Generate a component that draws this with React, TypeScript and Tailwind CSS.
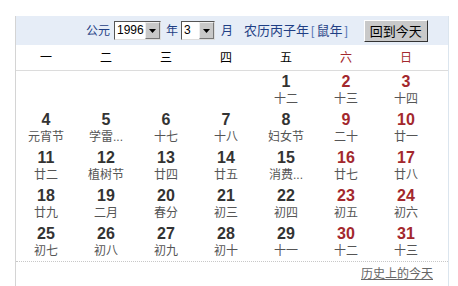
const days: { d: number; l: string }[] = [
  { d: 1, l: '十二' }, { d: 2, l: '十三' }, { d: 3, l: '十四' },
  { d: 4, l: '元宵节' }, { d: 5, l: '学雷...' }, { d: 6, l: '十七' }, { d: 7, l: '十八' },
  { d: 8, l: '妇女节' }, { d: 9, l: '二十' }, { d: 10, l: '廿一' },
  { d: 11, l: '廿二' }, { d: 12, l: '植树节' }, { d: 13, l: '廿四' }, { d: 14, l: '廿五' },
  { d: 15, l: '消费...' }, { d: 16, l: '廿七' }, { d: 17, l: '廿八' },
  { d: 18, l: '廿九' }, { d: 19, l: '二月' }, { d: 20, l: '春分' }, { d: 21, l: '初三' },
  { d: 22, l: '初四' }, { d: 23, l: '初五' }, { d: 24, l: '初六' },
  { d: 25, l: '初七' }, { d: 26, l: '初八' }, { d: 27, l: '初九' }, { d: 28, l: '初十' },
  { d: 29, l: '十一' }, { d: 30, l: '十二' }, { d: 31, l: '十三' },
];

const weekdays = ['一', '二', '三', '四', '五', '六', '日'];

function Select({ value, width }: { value: string; width: string }) {
  return (
    <div className={`flex items-stretch h-[19px] border border-t-[#555] border-l-[#555] border-b-[#ddd] border-r-[#ddd] bg-white ${width}`}>
      <span className="flex-1 pl-[2px] text-[12px] leading-[17px] text-black">{value}</span>
      <span className="w-[15px] bg-[#c8c8c8] border border-[#eee] border-r-[#777] border-b-[#777] flex items-center justify-center">
        <svg width="7" height="4" viewBox="0 0 7 4"><path d="M0 0h7L3.5 4z" fill="#000" /></svg>
      </span>
    </div>
  );
}

export default function App() {
  const cells: ({ d: number; l: string } | null)[] = [null, null, null, null, ...days];
  return (
    <div className="w-[458px] h-[286px] bg-white overflow-hidden pt-4 pl-[15px]" style={{ fontFamily: '"Liberation Sans", "Noto Sans CJK SC", sans-serif' }}>
      <div className="w-[434px] h-[270px] border-l border-l-[#d4d4d4] border-r border-r-[#dbe5ee]">
        {/* header */}
        <div className="h-[29px] bg-[#e6edf7] flex items-center text-[12px] text-[#1f3f85]">
          <span className="ml-[70px]">公元</span>
          <span className="ml-[4px]"><Select value="1996" width="w-[47px]" /></span>
          <span className="ml-[5px]">年</span>
          <span className="ml-[3px]"><Select value="3" width="w-[34px]" /></span>
          <span className="ml-[6px]">月</span>
          <span className="ml-[11px] text-[13px]">农历丙子年</span>
          <span className="ml-[2px] text-[#5a7ab8]">[</span>
          <span className="ml-[2px] text-[13px]">鼠年</span>
          <span className="ml-[2px] text-[#5a7ab8]">]</span>
          <button className="ml-[16px] mt-[1px] h-[22px] w-[64px] bg-[#c9c9c9] border border-t-[#fff] border-l-[#fff] border-r-[#333] border-b-[#333] text-[13px] text-black leading-none">
            回到今天
          </button>
        </div>
        {/* weekdays */}
        <div className="grid grid-cols-[repeat(7,60px)] h-[26px] border-b border-[#dcdcdc] items-center text-[12px]">
          {weekdays.map((w, i) => (
            <div key={w} className={`text-center ${i >= 5 ? 'text-[#a3282d]' : 'text-black'}`}>{w}</div>
          ))}
        </div>
        {/* days */}
        <div className="grid grid-cols-[repeat(7,60px)] border-b border-dotted border-[#c8c8c8]">
          {cells.map((c, i) => {
            const red = i % 7 >= 5;
            return (
              <div key={i} className="h-[38px] flex flex-col items-center pt-[2px]">
                {c && (
                  <>
                    <span className={`text-[16px] font-bold leading-[18px] ${red ? 'text-[#a3282d]' : 'text-[#333]'}`}>{c.d}</span>
                    <span className="text-[12px] leading-[16px] text-[#555]">{c.l}</span>
                  </>
                )}
              </div>
            );
          })}
        </div>
        <div className="flex justify-end pr-[15px] pt-[3px]">
          <a href="#" className="text-[12px] text-[#666] underline">历史上的今天</a>
        </div>
      </div>
    </div>
  );
}
